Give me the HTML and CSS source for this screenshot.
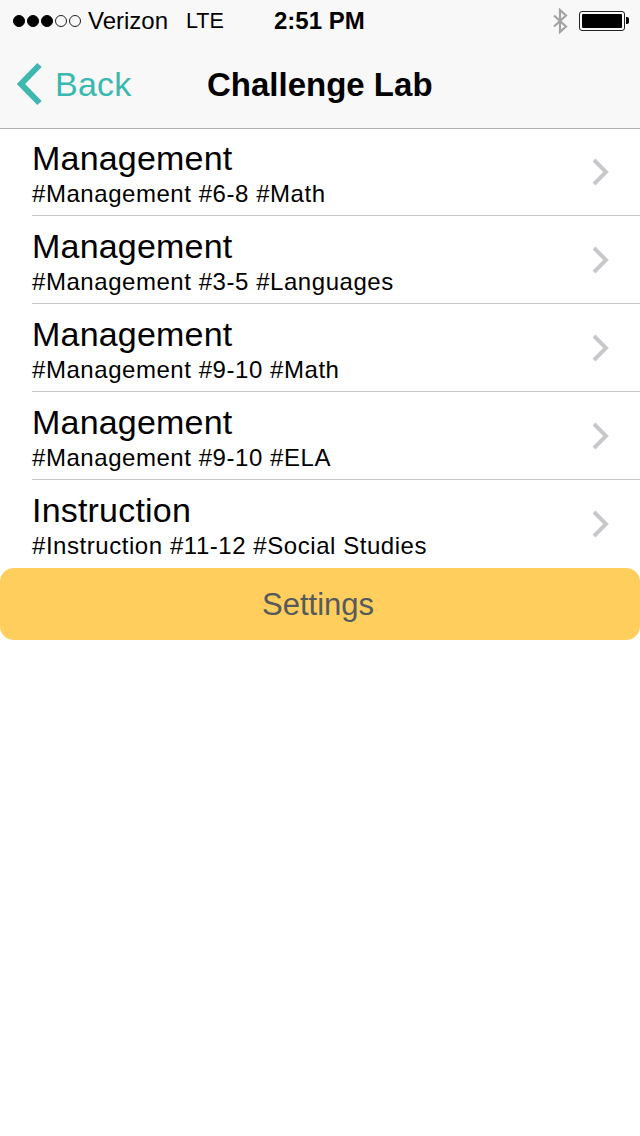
FILE: index.html
```html
<!DOCTYPE html>
<html lang="en">
<head>
<meta charset="utf-8">
<title>Challenge Lab</title>
<link rel="stylesheet" href="styles.css">
</head>
<body>
<header class="header">
  <div class="status">
    <div class="signal"><i class="dot on"></i><i class="dot on"></i><i class="dot on"></i><i class="dot"></i><i class="dot"></i></div>
    <span class="carrier">Verizon</span>
    <span class="net">LTE</span>
    <span class="time">2:51 PM</span>
    <svg class="bt" width="16" height="26" viewBox="0 0 16 26"><path d="M2 7.5 14 18.5 8 24V2l6 5.500L2 18.500" fill="none" stroke="#a3a3a3" stroke-width="2.2"/></svg>
    <div class="battery"><div class="cell"></div></div>
    <div class="nub"></div>
  </div>
  <nav class="nav">
    <svg class="back-icon" width="28" height="44" viewBox="0 0 28 44"><path d="M24.5 3 6 22l18.500 19" fill="none" stroke="#3bb8b0" stroke-width="6"/></svg>
    <span class="back">Back</span>
    <h1 class="title">Challenge Lab</h1>
  </nav>
</header>
<main>
  <ul class="list">
    <li class="row"><div class="text"><div class="name">Management</div><div class="tags">#Management #6-8 #Math</div></div><svg class="chev" width="20" height="28" viewBox="0 0 20 28"><path d="M3 2 15 14 3 26" fill="none" stroke="#c8c8cc" stroke-width="4"/></svg></li>
    <li class="row"><div class="text"><div class="name">Management</div><div class="tags">#Management #3-5 #Languages</div></div><svg class="chev" width="20" height="28" viewBox="0 0 20 28"><path d="M3 2 15 14 3 26" fill="none" stroke="#c8c8cc" stroke-width="4"/></svg></li>
    <li class="row"><div class="text"><div class="name">Management</div><div class="tags">#Management #9-10 #Math</div></div><svg class="chev" width="20" height="28" viewBox="0 0 20 28"><path d="M3 2 15 14 3 26" fill="none" stroke="#c8c8cc" stroke-width="4"/></svg></li>
    <li class="row"><div class="text"><div class="name">Management</div><div class="tags">#Management #9-10 #ELA</div></div><svg class="chev" width="20" height="28" viewBox="0 0 20 28"><path d="M3 2 15 14 3 26" fill="none" stroke="#c8c8cc" stroke-width="4"/></svg></li>
    <li class="row last"><div class="text"><div class="name">Instruction</div><div class="tags">#Instruction #11-12 #Social Studies</div></div><svg class="chev" width="20" height="28" viewBox="0 0 20 28"><path d="M3 2 15 14 3 26" fill="none" stroke="#c8c8cc" stroke-width="4"/></svg></li>
  </ul>
  <div class="settings">Settings</div>
</main>
</body>
</html>
```
FILE: styles.css
```css
* { box-sizing: border-box; }
html, body { margin: 0; padding: 0; background: #fff; }
body { width: 640px; height: 1136px; overflow: hidden; font-family: "Liberation Sans", Arial, sans-serif; color: #000; }
.header { height: 129px; background: #f8f8f8; border-bottom: 1px solid #b2b2b2; }
.status { height: 40px; display: flex; align-items: center; font-size: 24px; padding-top: 1px; }
.signal { display: flex; gap: 1px; margin-left: 13px; }
.dot { width: 12px; height: 12px; border-radius: 50%; border: 1px solid #222; display: block; margin-right: 1px; }
.dot.on { background: #000; border-color: #000; }
.carrier { margin-left: 6px; width: 98px; }
.net { font-size: 21.5px; width: 88px; padding-top: 2px; }
.time { font-weight: 700; width: 278px; }
.bt { margin-right: 11px; }
.battery { width: 46px; height: 20px; border: 1px solid #222; border-radius: 3px; padding: 2px; }
.cell { width: 100%; height: 100%; background: #000; border-radius: 1px; }
.nub { width: 3px; height: 7px; background: #000; border-radius: 0 2px 2px 0; margin-left: 1px; }
.nav { height: 88px; display: flex; align-items: center; padding-bottom: 1px; }
.back-icon { margin-left: 15px; }
.back { color: #3bb8b0; font-size: 34px; margin-left: 12px; width: 152px; letter-spacing: 0.2px; padding-top: 2px; }
.title { margin: 0; font-size: 33px; font-weight: 700; line-height: 40px; padding-top: 2px; box-sizing: content-box; }
.list { list-style: none; margin: -1px 0 0; padding: 0 0 0 32px; }
.row { height: 88px; border-bottom: 1px solid #c8c7cc; display: flex; align-items: flex-start; justify-content: space-between; padding-top: 10px; }
.row.last { border-bottom: 0; }
.name { font-size: 34px; line-height: 40px; letter-spacing: 0.2px; }
.tags { font-size: 24px; line-height: 30px; margin-top: 1px; letter-spacing: 0.55px; }
.chev { margin: 20px 29px 0 0; }
.settings { height: 72px; background: #ffce5c; border-radius: 14px; color: #555a5c; font-size: 31px; display: flex; align-items: center; justify-content: center; padding: 2px 4px 0 0; }
```
